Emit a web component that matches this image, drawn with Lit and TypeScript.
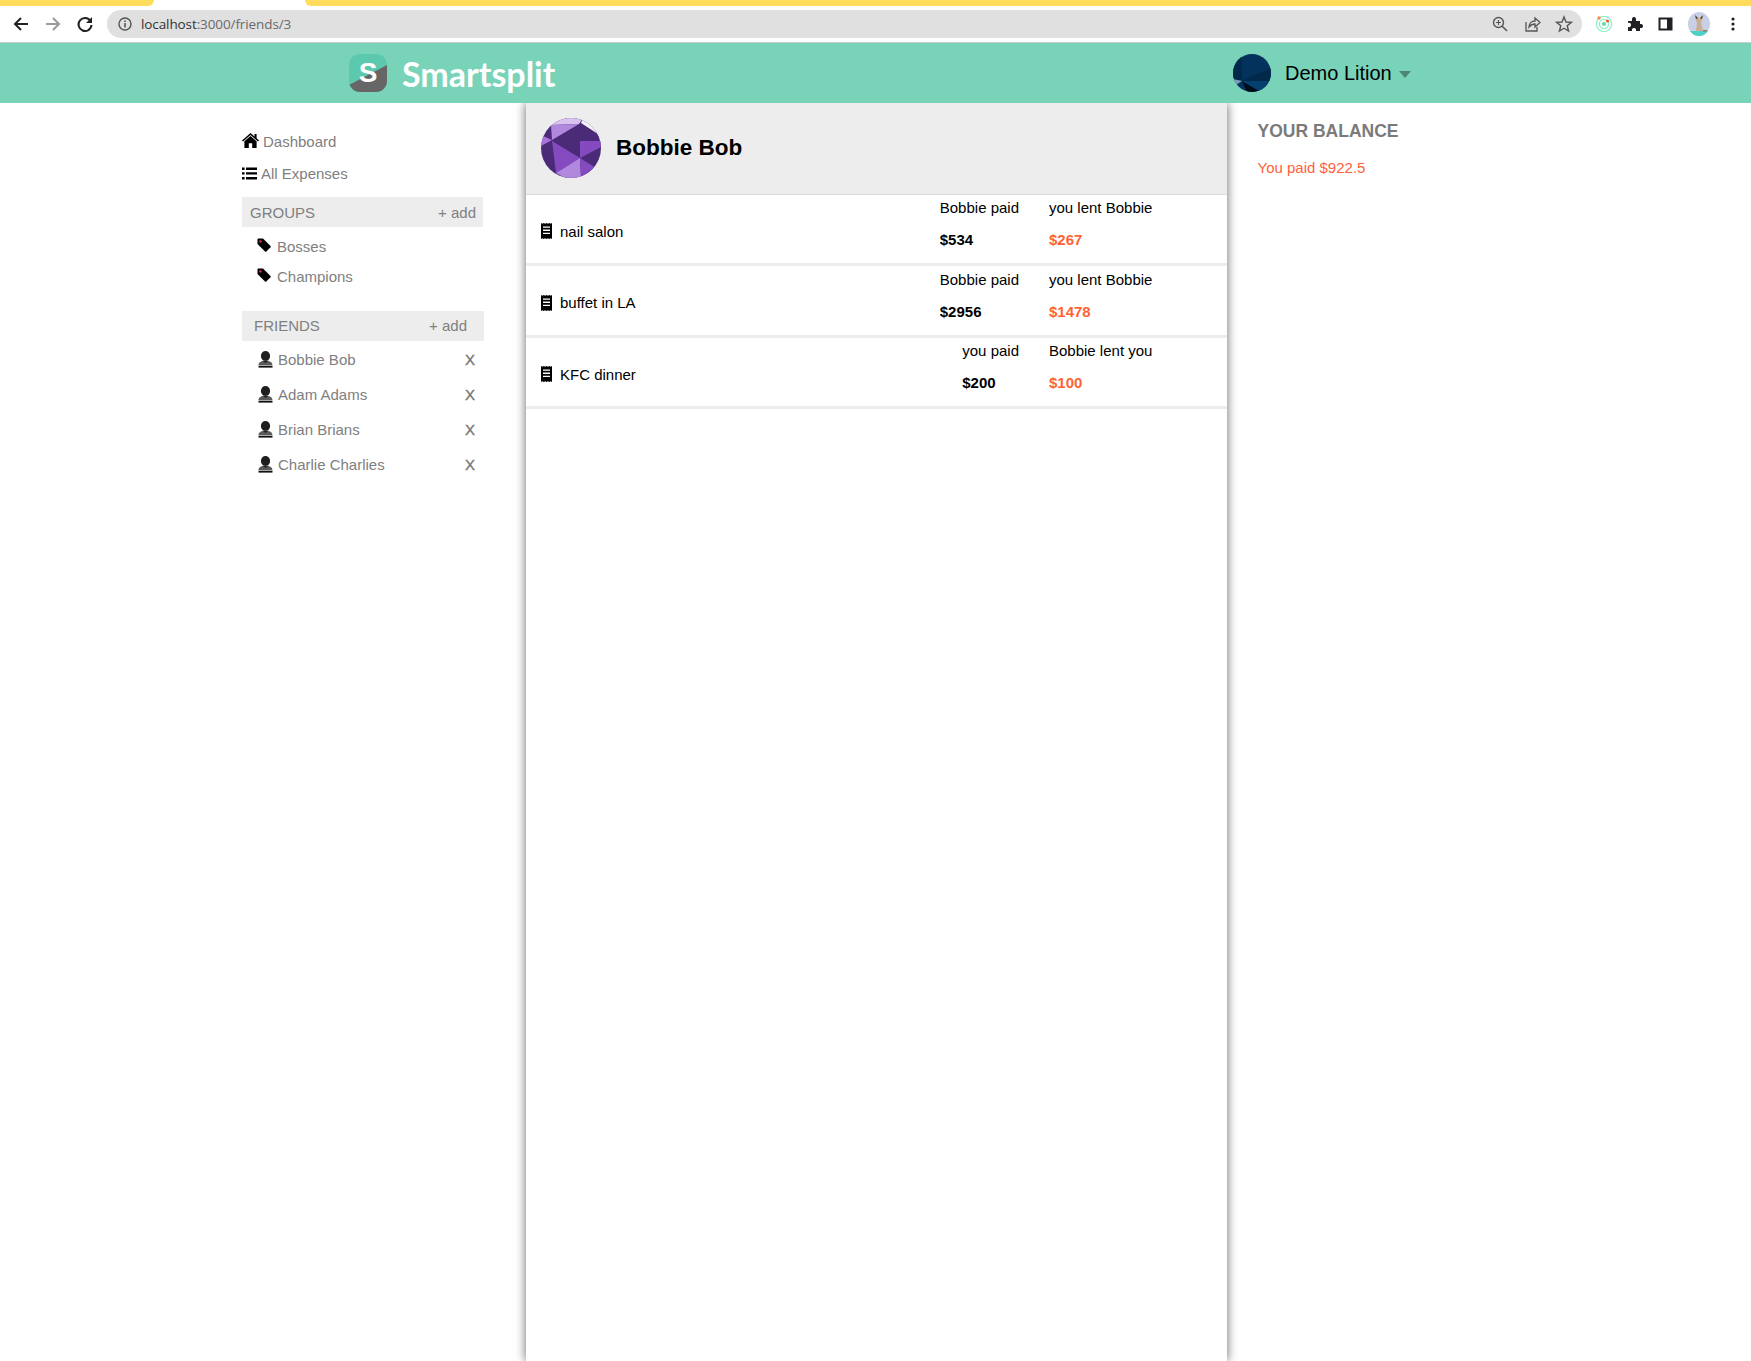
import { LitElement, html, css, svg } from 'lit';
import { customElement } from 'lit/decorators.js';

const groups = ['Bosses', 'Champions'];
const friends = ['Bobbie Bob', 'Adam Adams', 'Brian Brians', 'Charlie Charlies'];
const expenses = [
  { name: 'nail salon', paidLabel: 'Bobbie paid', paid: '$534', lentLabel: 'you lent Bobbie', lent: '$267' },
  { name: 'buffet in LA', paidLabel: 'Bobbie paid', paid: '$2956', lentLabel: 'you lent Bobbie', lent: '$1478' },
  { name: 'KFC dinner', paidLabel: 'you paid', paid: '$200', lentLabel: 'Bobbie lent you', lent: '$100' },
];

const homeIcon = svg`<svg class="ico home" width="17" height="15" viewBox="0 0 17 15"><path d="M8.5 0 L12.5 3.4 V1 H14.6 V5.2 L17 7.4 L16 8.5 L8.5 1.9 L1 8.5 L0 7.4 Z M8.5 2.9 L14.6 8.2 V15 H10.2 V10.2 H6.8 V15 H2.4 V8.2 Z" fill="#000"/></svg>`;
const listIcon = svg`<svg class="ico" width="15" height="13" viewBox="0 0 15 13"><path d="M0 0.5h2.6v2.4H0z M4 0.5h11v2.4H4z M0 5.2h2.6v2.4H0z M4 5.2h11v2.4H4z M0 10h2.6v2.4H0z M4 10h11v2.4H4z" fill="#000"/></svg>`;
const tagIcon = svg`<svg class="ico tag" width="14" height="14" viewBox="0 0 14 14"><path d="M0.5 1.5 Q0.5 0.5 1.5 0.5 H6 L13.5 8 Q14 8.7 13.5 9.3 L9.3 13.5 Q8.7 14 8 13.5 L0.5 6 Z" fill="#000"/><circle cx="3.4" cy="3.4" r="1.2" fill="#e8304a"/></svg>`;
const userIcon = svg`<svg class="ico" width="15" height="17" viewBox="0 0 15 17"><ellipse cx="7.5" cy="5" rx="4.6" ry="5" fill="#1e1e1e"/><path d="M0.5 14.6 C0.5 11 3.6 10.6 5.4 9.6 H9.6 C11.4 10.6 14.5 11 14.5 14.6 Z" fill="#5a5a5a"/><path d="M5 9.8 H10 L7.5 12 Z" fill="#1e1e1e"/><rect x="0.5" y="15" width="14" height="1.6" fill="#111"/></svg>`;
const receiptIcon = svg`<svg class="ico" width="11" height="16" viewBox="0 0 11 16"><path d="M0 0 L1.4 0.8 L2.7 0 L4.1 0.8 L5.5 0 L6.9 0.8 L8.3 0 L9.6 0.8 L11 0 V16 L9.6 15.2 L8.3 16 L6.9 15.2 L5.5 16 L4.1 15.2 L2.7 16 L1.4 15.2 L0 16 Z" fill="#000"/><path d="M2 3.4h7v1.3H2z M2 6.6h7v1.3H2z M2 9.8h7v1.3H2z" fill="#fff"/></svg>`;

const tile = svg`<svg class="logo" width="38" height="38" viewBox="0 0 38 38">
  <defs><clipPath id="lc"><rect width="38" height="38" rx="11"/></clipPath></defs>
  <g clip-path="url(#lc)">
    <rect width="38" height="38" fill="#5cc8ad"/>
    <path d="M0 31 L38 11 V38 H0 Z" fill="#666"/>
  </g>
</svg>`;

const purpleAvatar = svg`<svg width="60" height="60" viewBox="0 0 60 60">
  <defs><clipPath id="pc"><circle cx="30" cy="30" r="30"/></clipPath></defs>
  <g clip-path="url(#pc)">
    <rect width="60" height="60" fill="#4b2a78"/>
    <path d="M5 0 H42 L38 6 L10 7 Z" fill="#d9c3ee"/>
    <path d="M42 0 H60 V18 L40 5 Z" fill="#f4f1f6"/>
    <path d="M10 7 L38 6 L11 22 Z" fill="#b088dd"/>
    <path d="M39 23 H60 V29 L39 40 Z" fill="#8549c0"/>
    <path d="M2 18 L11 22 L0 28 Z" fill="#a873dc"/>
    <path d="M11 23 L39 40 L15 55 Z" fill="#8549c0"/>
    <path d="M39 40 L15 55 L24 60 H40 Z" fill="#b088dd"/>
    <path d="M39 40 L55 50 L40 60 Z" fill="#8549c0"/>
  </g>
</svg>`;

const blueAvatar = svg`<svg class="blue" width="38" height="38" viewBox="0 0 38 38">
  <defs><clipPath id="bc"><circle cx="19" cy="19" r="19"/></clipPath></defs>
  <g clip-path="url(#bc)">
    <rect width="38" height="38" fill="#03335d"/>
    <path d="M0 0 H9 V26 H0 Z" fill="#02284a"/>
    <path d="M9 27 L38 14 V27 Z" fill="#02284a"/>
    <path d="M0 25 L9 27 L3 31 Z" fill="#7f9db8"/>
    <path d="M9 27 L28 38 H14 Z" fill="#000c18"/>
    <path d="M9 27 L38 27 V38 H28 Z" fill="#034070"/>
  </g>
</svg>`;

const catAvatar = svg`<svg width="22" height="24" viewBox="0 0 22 24">
  <defs><clipPath id="cc"><ellipse cx="11" cy="12" rx="11" ry="12"/></clipPath></defs>
  <g clip-path="url(#cc)">
    <rect width="22" height="24" fill="#c9cfe6"/>
    <rect y="19" width="22" height="5" fill="#4fd1c5"/>
    <path d="M8 8 L7 3 L10 6 H12 L15 3 L14 8 L13 11 L15 19 H8 L9 11 Z" fill="#c9ae92"/>
    <path d="M8 7 L7 3 L10 6 Z M14 7 L15 3 L12 6 Z" fill="#4a3a30"/>
    <path d="M15 18 H19 V19.5 H15 Z" fill="#8f7a66"/>
  </g>
</svg>`;

@customElement('browser-bar')
export class BrowserBar extends LitElement {
  static styles = css`
    :host { display: block; background: #fff; }
    .tabs { display: flex; height: 6px; background: #fff; }
    .tab { background: #ffdc5c; }
    .tab.left { width: 154px; border-radius: 0 0 6px 0; }
    .tab.right { margin-left: 151px; flex: 1; border-radius: 0 0 0 6px; }
    .tools { display: flex; align-items: center; height: 36px; border-bottom: 1px solid #c8ccce; }
    .nav { display: flex; gap: 14px; padding-left: 12px; width: 107px; box-sizing: border-box; }
    .nav svg { display: block; }
    .omni { display: flex; align-items: center; width: 1475px; height: 28px; border-radius: 14px; background: #e0e0e0; box-sizing: border-box; padding: 0 9px 0 10px; }
    .url { margin-left: 8px; font: 13.5px 'Open Sans', 'Liberation Sans', sans-serif; color: #6a6a6a; letter-spacing: -0.1px; flex: 1; }
    .url b { font-weight: 400; color: #333; }
    .omni-end { display: flex; gap: 14px; }
    .exts { display: flex; align-items: center; gap: 14px; margin-left: 13px; }
    .exts svg { display: block; }
    .dots { margin-left: 1px; }
  `;

  render() {
    return html`
      <div class="tabs"><div class="tab left"></div><div class="tab right"></div></div>
      <div class="tools">
        <div class="nav">
          <svg width="18" height="18" viewBox="0 0 18 18"><path d="M16 9 H3 M9 3 L3 9 L9 15" fill="none" stroke="#222" stroke-width="2"/></svg>
          <svg width="18" height="18" viewBox="0 0 18 18"><path d="M2 9 H15 M9 3 L15 9 L9 15" fill="none" stroke="#9a9a9a" stroke-width="2"/></svg>
          <svg width="18" height="18" viewBox="0 0 18 18"><path d="M14.5 6 A6.5 6.5 0 1 0 15.5 10" fill="none" stroke="#222" stroke-width="2"/><path d="M16 2 V8 H10 Z" fill="#222"/></svg>
        </div>
        <div class="omni">
          <svg width="16" height="16" viewBox="0 0 16 16"><circle cx="8" cy="8" r="6" fill="none" stroke="#555" stroke-width="1.4"/><path d="M7.2 7h1.6v4.4H7.2z M7.2 4.4h1.6V6H7.2z" fill="#555"/></svg>
          <span class="url"><b>localhost</b>:3000/friends/3</span>
          <div class="omni-end">
            <svg width="18" height="18" viewBox="0 0 18 18"><circle cx="7.5" cy="7.5" r="5" fill="none" stroke="#555" stroke-width="1.4"/><path d="M11 11 L16 16" stroke="#555" stroke-width="1.6"/><path d="M5 7.5h5 M7.5 5v5" stroke="#555" stroke-width="1.2"/></svg>
            <svg width="18" height="18" viewBox="0 0 18 18"><path d="M3 7 V16 H14 V12" fill="none" stroke="#555" stroke-width="1.3"/><path d="M6 12 C6 8 9 6 12 6 V3 L17 7.5 L12 12 V9 C9.5 9 7.5 10 6 12 Z" fill="none" stroke="#555" stroke-width="1.3"/></svg>
            <svg width="18" height="18" viewBox="0 0 18 18"><path d="M9 2 L11 7 L16.4 7.4 L12.2 10.8 L13.6 16 L9 13.2 L4.4 16 L5.8 10.8 L1.6 7.4 L7 7 Z" fill="none" stroke="#555" stroke-width="1.4"/></svg>
          </div>
        </div>
        <div class="exts">
          <svg width="18" height="18" viewBox="0 0 18 18"><circle cx="9" cy="9" r="7.6" fill="none" stroke="#8ef0c4" stroke-width="1.3"/><circle cx="9" cy="9" r="4.6" fill="none" stroke="#8ef0c4" stroke-width="1.3"/><circle cx="9" cy="9" r="2" fill="#5fdca5"/><circle cx="4" cy="3" r="1.7" fill="#ff8a50"/><circle cx="12.5" cy="6" r="1.6" fill="#f0553a"/></svg>
          <svg width="16" height="16" viewBox="0 0 16 16"><path d="M1 5 H5 C4.5 2.5 5.5 1 7 1 S9.5 2.5 9 5 H13 V8 C15.5 7.5 16 9 16 10 S15.5 12.5 13 12 V15 H9 C9.5 13 8.5 12 7 12 S4.5 13 5 15 H1 V11 C3 11.5 4 10.5 4 9 S3 6.5 1 7 Z" fill="#202124"/></svg>
          <svg width="17" height="16" viewBox="0 0 16 16"><path d="M1 1.5h14v13H1z" fill="#202124"/><path d="M3 3.5h6.5v9H3z" fill="#fff"/></svg>
          ${catAvatar}
          <svg class="dots" width="16" height="16" viewBox="0 0 16 16"><circle cx="8" cy="3" r="1.6" fill="#202124"/><circle cx="8" cy="8" r="1.6" fill="#202124"/><circle cx="8" cy="13" r="1.6" fill="#202124"/></svg>
        </div>
      </div>
    `;
  }
}

@customElement('side-nav')
export class SideNav extends LitElement {
  static styles = css`
    :host { display: block; width: 242px; padding-top: 22px; color: #808080; font-size: 15px; }
    .ico { flex: none; }
    .home, .tag { margin-top: -2px; }
    .link { display: flex; align-items: center; height: 32px; gap: 4px; }
    .bar { display: flex; justify-content: space-between; align-items: center; height: 30px; background: #ededed; box-sizing: border-box; }
    .bar.groups { width: 241px; margin-top: 8px; padding: 0 7px 0 8px; margin-bottom: 4px; }
    .bar.friends { margin-top: 20px; padding: 0 17px 2px 12px; margin-bottom: 1px; }
    .group { display: flex; align-items: center; height: 30px; gap: 6px; padding-left: 15px; }
    .friend { display: flex; align-items: center; height: 35px; gap: 5px; padding: 0 9px 0 16px; }
    .friend .nm { flex: 1; }
    .x { font-size: 15px; color: #777; -webkit-text-stroke: 0.4px #777; }
  `;

  render() {
    return html`
      <div class="link">${homeIcon}<span>Dashboard</span></div>
      <div class="link">${listIcon}<span>All Expenses</span></div>
      <div class="bar groups"><span>GROUPS</span><span>+ add</span></div>
      ${groups.map((g) => html`<div class="group">${tagIcon}<span>${g}</span></div>`)}
      <div class="bar friends"><span>FRIENDS</span><span>+ add</span></div>
      ${friends.map(
        (f) => html`<div class="friend">${userIcon}<span class="nm">${f}</span><span class="x">X</span></div>`
      )}
    `;
  }
}

@customElement('app-root')
export class AppRoot extends LitElement {
  static styles = css`
    :host { display: block; height: 1361px; overflow: hidden; background: #fff; font-family: 'Liberation Sans', Arial, sans-serif; }
    .top { position: relative; z-index: 2; display: flex; align-items: center; height: 60px; background: #79d3b9; padding-left: 349px; }
    .tile { position: relative; width: 38px; height: 38px; }
    .logo { display: block; }
    .s { position: absolute; inset: 0; display: flex; align-items: center; justify-content: center; color: #fff; font: 700 28px 'Liberation Sans', sans-serif; }
    .brand { margin-left: 15px; color: #fff; font: 700 34px Lato, 'Open Sans', sans-serif; width: 831px; }
    .blue { display: block; }
    .user { margin-left: 14px; font-size: 20px; color: #000; }
    .caret { margin-left: 7px; margin-top: 3px; width: 0; height: 0; border: 6px solid transparent; border-top: 7px solid #4e8573; border-bottom: 0; }
    .page { display: flex; height: 1258px; }
    side-nav { margin-left: 242px; }
    .main { margin-left: 42px; width: 701px; box-shadow: 0 0 10px rgba(0, 0, 0, 0.6); }
    .head { display: flex; align-items: center; height: 92px; gap: 15px; padding: 0 0 2px 15px; box-sizing: border-box; background: #ededed; border-bottom: 1px solid #dcdcdc; }
    .head svg { display: block; }
    h1 { margin: 0; font-size: 22.5px; font-weight: 700; color: #000; }
    .row { display: flex; height: 71.33px; box-sizing: border-box; border-bottom: 3px solid #ededed; font-size: 15px; line-height: 17px; color: #000; padding: 4.4px 0 0 15px; }
    .desc { display: flex; align-items: center; gap: 8px; flex: 1; height: 64px; }
    .col { display: flex; flex-direction: column; gap: 15px; }
    .col b { font-size: 15px; }
    .lent { width: 178px; margin-left: 30px; }
    .lent b { color: #ff6335; }
    .side { padding: 18px 0 0 30.5px; }
    h2 { margin: 0; font-size: 17.5px; line-height: 20px; font-weight: 700; color: #7a7a7a; }
    .bal { margin-top: 18px; font-size: 15px; color: #ff6139; }
  `;

  render() {
    return html`
      <browser-bar></browser-bar>
      <div class="top">
        <div class="tile">${tile}<span class="s">S</span></div>
        <div class="brand">Smartsplit</div>
        ${blueAvatar}
        <span class="user">Demo Lition</span>
        <span class="caret"></span>
      </div>
      <div class="page">
        <side-nav></side-nav>
        <div class="main">
          <div class="head">${purpleAvatar}<h1>Bobbie Bob</h1></div>
          ${expenses.map(
            (e) => html`
              <div class="row">
                <div class="desc">${receiptIcon}<span>${e.name}</span></div>
                <div class="col"><span>${e.paidLabel}</span><b>${e.paid}</b></div>
                <div class="col lent"><span>${e.lentLabel}</span><b>${e.lent}</b></div>
              </div>
            `
          )}
        </div>
        <div class="side">
          <h2>YOUR BALANCE</h2>
          <div class="bal">You paid $922.5</div>
        </div>
      </div>
    `;
  }
}
